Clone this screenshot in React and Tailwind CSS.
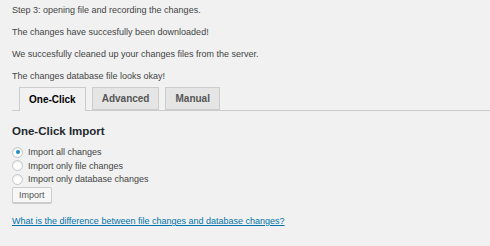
import React, { useState } from 'react';

const tabs = ['One-Click', 'Advanced', 'Manual'];

const options = [
  'Import all changes',
  'Import only file changes',
  'Import only database changes',
];

const App = () => {
  const [active, setActive] = useState('One-Click');
  const [choice, setChoice] = useState(0);

  return (
    <div className="w-[490px] h-[246px] bg-[#f1f1f1] text-[#444] overflow-hidden" style={{ fontFamily: '"Liberation Sans", Arial, sans-serif' }}>
      {/* Status messages */}
      <div className="pl-3 pt-[4px] text-[9px] leading-[12px] flex flex-col gap-[10px]">
        <p>Step 3: opening file and recording the changes.</p>
        <p>The changes have succesfully been downloaded!</p>
        <p>We succesfully cleaned up your changes files from the server.</p>
        <p>The changes database file looks okay!</p>
      </div>

      {/* Tabs */}
      <div className="mt-[5px] ml-[12px] flex items-end gap-[6px] pl-[7px] border-b border-[#ccc] h-[24px]">
        {tabs.map(tab => (
          <button
            key={tab}
            onClick={() => setActive(tab)}
            className={
              tab === active
                ? 'h-[24px] -mb-px px-[9px] border border-b-0 border-[#ccc] bg-[#f1f1f1] text-[#000] text-[10px] font-semibold'
                : 'h-[23px] px-[9px] border border-[#ccc] bg-[#e5e5e5] text-[#555] text-[10px] font-semibold'
            }
          >
            {tab}
          </button>
        ))}
      </div>

      {/* One-Click import */}
      <div className="pl-3 pt-[12px]">
        <h2 className="text-[11.5px] font-semibold text-[#23282d] leading-[16px]">One-Click Import</h2>
        <div className="mt-[7px] flex flex-col gap-[1.5px]">
          {options.map((opt, i) => (
            <label key={opt} className="flex items-center gap-[5px] text-[9px] text-[#444] leading-[12px]" onClick={() => setChoice(i)}>
              <span className="w-[11px] h-[11px] rounded-full border border-[#c3c7cb] bg-white flex items-center justify-center shadow-[inset_0_1px_2px_rgba(0,0,0,0.1)]">
                {choice === i && <span className="w-[4px] h-[4px] rounded-full bg-[#1e8cbe]" />}
              </span>
              {opt}
            </label>
          ))}
        </div>
        <div className="flex mt-[2px]">
          <button className="h-[16px] px-[6px] border border-[#ccc] rounded-[2px] bg-[#f7f7f7] text-[9px] leading-[12px] text-[#555] shadow-[0_1px_0_#ccc]">
            Import
          </button>
        </div>
        <div className="mt-[10px] leading-[12px]">
          <a href="#" className="text-[9px] text-[#0073aa] underline">What is the difference between file changes and database changes?</a>
        </div>
      </div>
    </div>
  );
};

export default App;
